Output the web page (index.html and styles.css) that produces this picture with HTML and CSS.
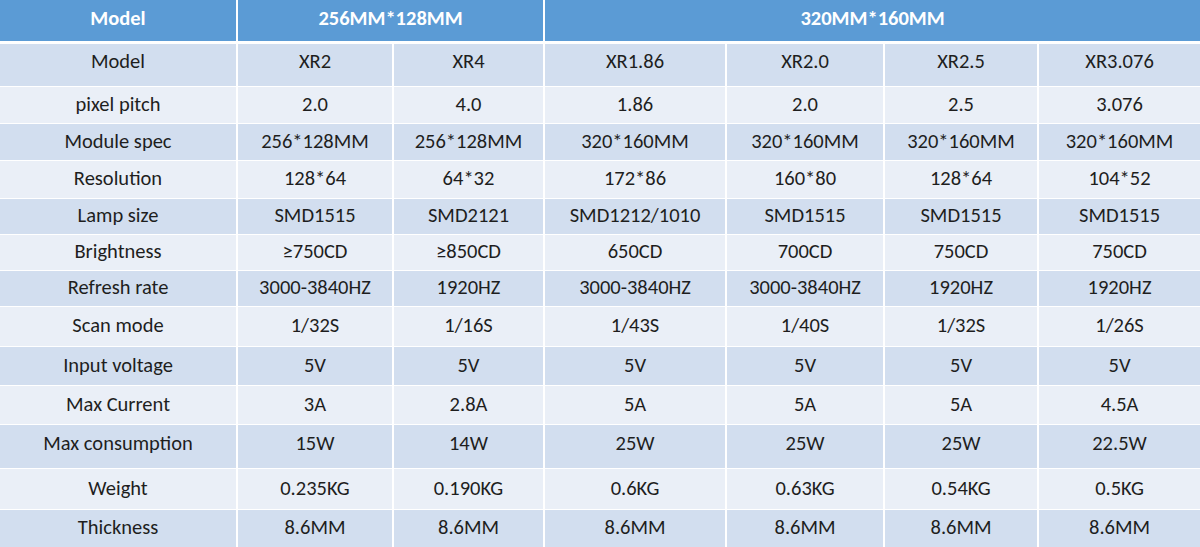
FILE: index.html
```html
<html>
<head>
	<meta charset="utf-8">
	<title>Module spec</title>
	<link rel="stylesheet" href="styles.css">
</head>
<body>
	<table class="spec">
		<colgroup>
			<col class="c1"><col class="c2"><col class="c3"><col class="c4"><col class="c5"><col class="c6"><col class="c7">
		</colgroup>
		<thead>
			<tr class="head">
				<th>Model</th>
				<th colspan="2">256MM*128MM</th>
				<th colspan="4">320MM*160MM</th>
			</tr>
		</thead>
		<tbody>
			<tr class="dark first h45"><td>Model</td><td>XR2</td><td>XR4</td><td>XR1.86</td><td>XR2.0</td><td>XR2.5</td><td>XR3.076</td></tr>
			<tr class="light h37"><td>pixel pitch</td><td>2.0</td><td>4.0</td><td>1.86</td><td>2.0</td><td>2.5</td><td>3.076</td></tr>
			<tr class="dark h37"><td>Module spec</td><td>256*128MM</td><td>256*128MM</td><td>320*160MM</td><td>320*160MM</td><td>320*160MM</td><td>320*160MM</td></tr>
			<tr class="light h38"><td>Resolution</td><td>128*64</td><td>64*32</td><td>172*86</td><td>160*80</td><td>128*64</td><td>104*52</td></tr>
			<tr class="dark h36"><td>Lamp size</td><td>SMD1515</td><td>SMD2121</td><td>SMD1212/1010</td><td>SMD1515</td><td>SMD1515</td><td>SMD1515</td></tr>
			<tr class="light h36"><td>Brightness</td><td>&ge;750CD</td><td>&ge;850CD</td><td>650CD</td><td>700CD</td><td>750CD</td><td>750CD</td></tr>
			<tr class="dark h36"><td>Refresh rate</td><td>3000-3840HZ</td><td>1920HZ</td><td>3000-3840HZ</td><td>3000-3840HZ</td><td>1920HZ</td><td>1920HZ</td></tr>
			<tr class="light h40"><td>Scan mode</td><td>1/32S</td><td>1/16S</td><td>1/43S</td><td>1/40S</td><td>1/32S</td><td>1/26S</td></tr>
			<tr class="dark h39"><td>Input voltage</td><td>5V</td><td>5V</td><td>5V</td><td>5V</td><td>5V</td><td>5V</td></tr>
			<tr class="light h39"><td>Max Current</td><td>3A</td><td>2.8A</td><td>5A</td><td>5A</td><td>5A</td><td>4.5A</td></tr>
			<tr class="dark h44 raised"><td>Max consumption</td><td>15W</td><td>14W</td><td>25W</td><td>25W</td><td>25W</td><td>22.5W</td></tr>
			<tr class="light h41"><td>Weight</td><td>0.235KG</td><td>0.190KG</td><td>0.6KG</td><td>0.63KG</td><td>0.54KG</td><td>0.5KG</td></tr>
			<tr class="dark h38"><td>Thickness</td><td>8.6MM</td><td>8.6MM</td><td>8.6MM</td><td>8.6MM</td><td>8.6MM</td><td>8.6MM</td></tr>
		</tbody>
	</table>
</body>
</html>
```

FILE: styles.css
```css
body{
	margin: 0px;
	background: #ffffff;
	font-family: Carlito, "Open Sans", sans-serif;
}
.spec{
	width: 1200px;
	table-layout: fixed;
	border-collapse: separate;
	border-spacing: 0;
	color: #1e1e1e;
	font-size: 20.5px;
}
.c1{width:236px}
.c2{width:156px}
.c3{width:151px}
.c4{width:182px}
.c5{width:158px}
.c6{width:154px}
.c7{width:163px}

.spec th, .spec td{
	padding: 0px;
	text-align: center;
	vertical-align: middle;
	white-space: nowrap;
}
.spec td + td, .spec th + th{
	border-left: 2px solid #ffffff;
}
.spec td{
	border-top: 1px solid #ffffff;
	padding-bottom: 3px;
}
.head{height:41px}
.head th{
	background-color: #5b9bd5;
	color: #ffffff;
	font-weight: bold;
	font-size: 20.5px;
	padding-bottom: 6px;
}
.first td{
	border-top: 3px solid #ffffff;
	padding-bottom: 9px;
}
.raised td{padding-bottom: 7px}

.dark td{background-color: #d2deef}
.light td{background-color: #eaeff7}

.h36{height:36px}
.h37{height:37px}
.h38{height:38px}
.h39{height:39px}
.h40{height:40px}
.h41{height:41px}
.h44{height:44px}
.h45{height:45px}
```
